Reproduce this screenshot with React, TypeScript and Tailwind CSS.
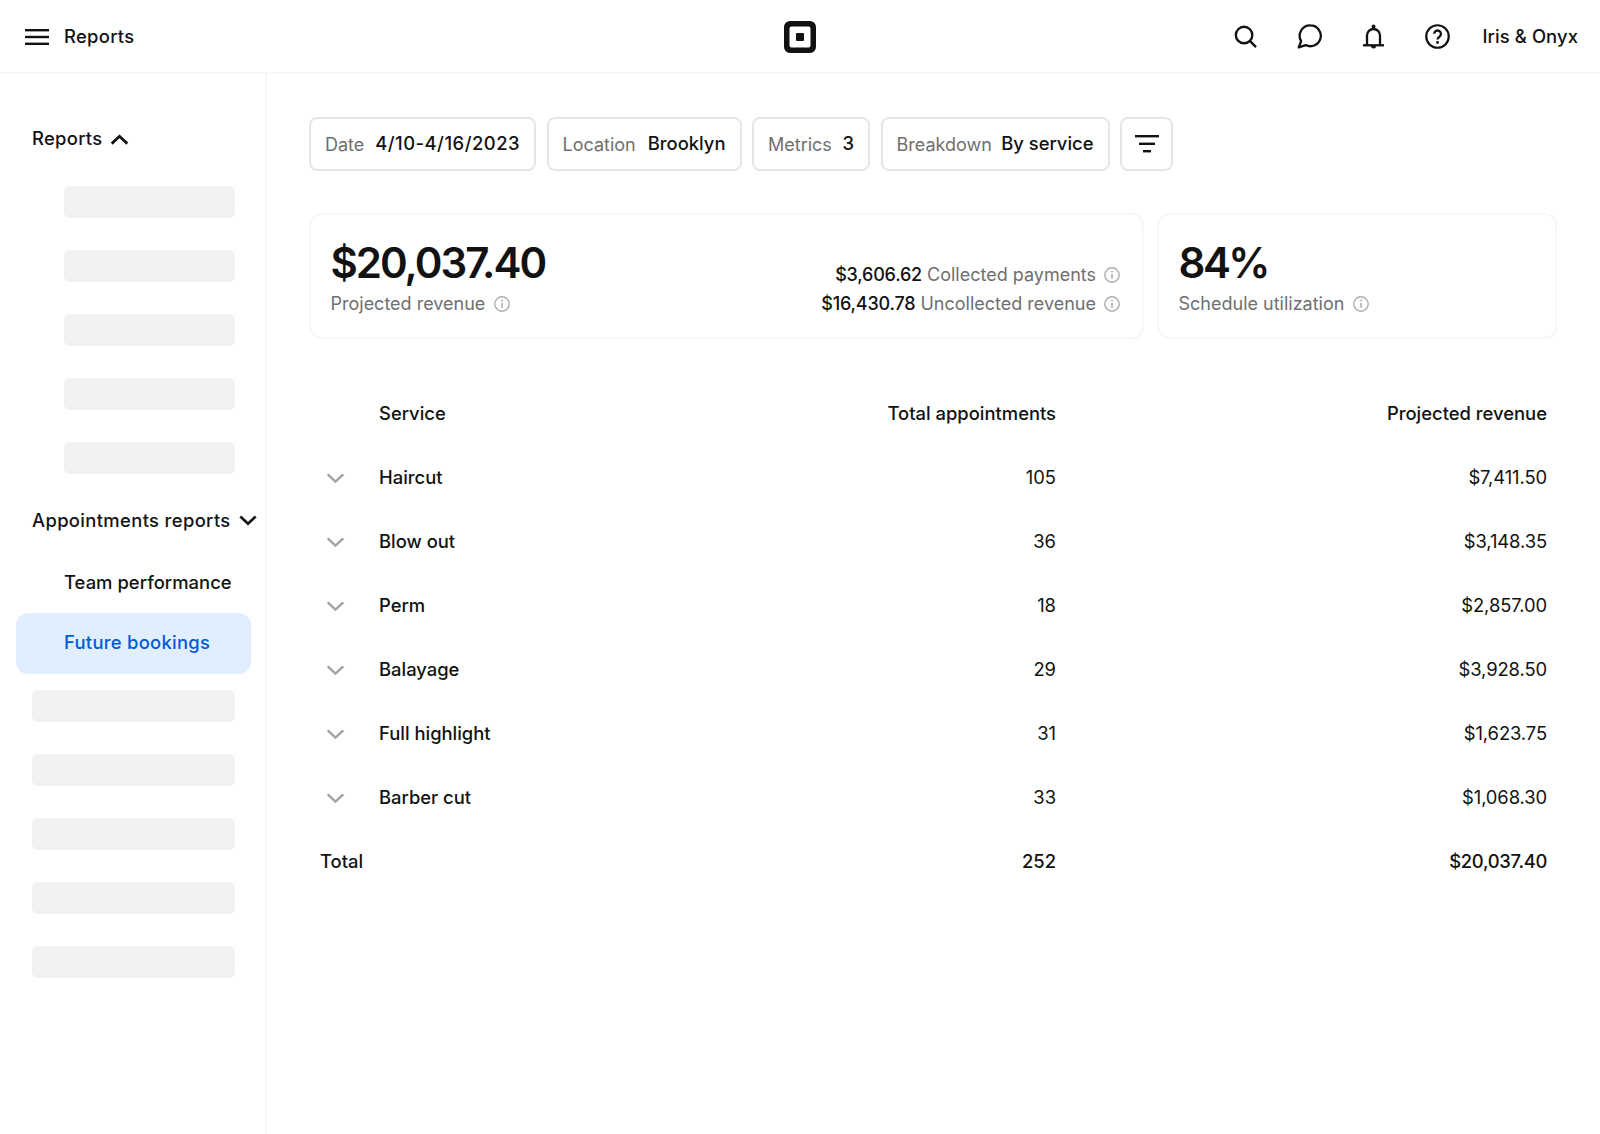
import React from "react";

const Skeleton = ({ wide }: { wide?: boolean }) => (
  <div className={`h-[32px] rounded-[6px] bg-[#f2f2f2] ${wide ? "w-[203px] ml-[32px]" : "w-[171px] ml-[64px]"}`} />
);

const Chevron = ({ up, className, weight = 2.6 }: { up?: boolean; className?: string; weight?: number }) => (
  <svg viewBox="0 0 20 12" fill="none" stroke="currentColor" strokeWidth={weight} className={className}>
    <path d={up ? "M1.5 10.5 10 2.5l8.5 8" : "M1.5 1.5l8.5 8 8.5-8"} />
  </svg>
);

const Info = () => (
  <svg viewBox="0 0 16 16" fill="none" className="w-[16px] h-[16px] text-[#adadad]" stroke="currentColor" strokeWidth="1.4">
    <circle cx="8" cy="8" r="7.2" />
    <path d="M8 7v4.8" strokeWidth="1.6" />
    <circle cx="8" cy="4.5" r="1" fill="currentColor" stroke="none" />
  </svg>
);

const Chip = ({ label, value, className, valueClass }: { label: string; value: string; className: string; valueClass?: string }) => (
  <div className={`h-[54px] border-2 border-[#e6e6e6] rounded-[8px] flex items-center justify-between px-[14px] ${className}`}>
    <span className="text-[#6f6f6f] text-[18px]">{label}</span>
    <span className={`font-medium text-[#121212] ${valueClass ?? ""}`}>{value}</span>
  </div>
);

const rows = [
  ["Haircut", "105", "$7,411.50"],
  ["Blow out", "36", "$3,148.35"],
  ["Perm", "18", "$2,857.00"],
  ["Balayage", "29", "$3,928.50"],
  ["Full highlight", "31", "$1,623.75"],
  ["Barber cut", "33", "$1,068.30"],
];

export default function App() {
  return (
    <div className="w-[1600px] h-[1134px] bg-white text-[#121212] text-[18.4px] overflow-hidden flex flex-col font-['Inter',sans-serif]">
      <header className="h-[74px] shrink-0 border-b-2 border-[#f7f7f7] flex items-center justify-between pl-[25px] pr-[22px] pt-[2px]">
        <div className="w-[397px] flex items-center gap-[15px]">
          <svg viewBox="0 0 24 16" className="w-[24px] h-[16px]" fill="currentColor">
            <rect width="24" height="2.4" y="0" />
            <rect width="24" height="2.4" y="6.8" />
            <rect width="24" height="2.4" y="13.6" />
          </svg>
          <span className="font-medium tracking-[0.3px]">Reports</span>
        </div>
        <svg viewBox="0 0 32 32" className="w-[32px] h-[32px]">
          <path fillRule="evenodd" fill="#121212" d="M6 0h20a6 6 0 0 1 6 6v20a6 6 0 0 1-6 6H6a6 6 0 0 1-6-6V6a6 6 0 0 1 6-6Zm1.5 5.5a2 2 0 0 0-2 2v17a2 2 0 0 0 2 2h17a2 2 0 0 0 2-2v-17a2 2 0 0 0-2-2Z" />
          <rect x="12" y="12" width="8" height="8" rx="1" fill="#121212" />
        </svg>
        <div className="w-[400px] flex items-center justify-end">
          <svg viewBox="0 0 24 24" fill="none" stroke="#121212" strokeWidth="2.5" className="w-[23px] h-[23px] mr-[40px]">
            <circle cx="10.5" cy="10.5" r="8.6" />
            <path d="M16.5 16.5 23 23" />
          </svg>
          <svg viewBox="0 0 26 26" fill="none" stroke="#121212" strokeWidth="2.4" className="w-[25px] h-[25px] mr-[41px]">
            <path d="M14 1.5a10.8 10.8 0 1 1-5 20.4L1.8 24.4l2.5-6.6A10.8 10.8 0 0 1 14 1.5Z" strokeLinejoin="round" />
          </svg>
          <svg viewBox="0 0 21 25" fill="none" stroke="#121212" strokeWidth="2.3" className="w-[21px] h-[25px] mr-[41px]">
            <path d="M4 21v-9.5a6.5 6.5 0 0 1 13 0V21" />
            <path d="M0 21.3h21" />
            <circle cx="10.5" cy="2.4" r="2" fill="#121212" stroke="none" />
            <path d="M8 22h5a2.5 2.5 0 0 1-5 0Z" fill="#121212" stroke="none" />
          </svg>
          <svg viewBox="0 0 26 26" fill="none" stroke="#121212" strokeWidth="2.3" className="w-[25px] h-[25px] mr-[32px]">
            <circle cx="13" cy="13" r="11.7" />
            <path d="M9.6 10.2a3.5 3.5 0 1 1 5.4 3c-1.3.8-2 1.4-2 2.9" strokeWidth="2.4" />
            <circle cx="13" cy="19.3" r="1.5" fill="#121212" stroke="none" />
          </svg>
          <span className="font-medium tracking-[0.1px]">Iris &amp; Onyx</span>
        </div>
      </header>

      <div className="flex-1 flex min-h-0">
        <aside className="w-[267px] shrink-0 border-r-2 border-[#f7f7f7] pt-[50px]">
          <div className="ml-[32px] h-[30px] flex items-center gap-[8px] font-medium tracking-[0.3px]">
            <span>Reports</span>
            <Chevron up weight={3} className="w-[19px] h-[11px]" />
          </div>
          <div className="mt-[31.5px] flex flex-col gap-[32px]">
            {[0, 1, 2, 3, 4].map((i) => <Skeleton key={i} />)}
          </div>
          <div className="mt-[32px] ml-[32px] h-[30px] flex items-center gap-[8px] font-medium tracking-[0.36px]">
            <span>Appointments reports</span>
            <Chevron weight={3} className="w-[18px] h-[11px]" />
          </div>
          <div className="mt-[32px] ml-[64px] h-[30px] flex items-center font-medium tracking-[0.04px]">Team performance</div>
          <div className="mt-[15px] ml-[16px] w-[235px] h-[61px] rounded-[12px] bg-[#e1eefe] pl-[48px] flex items-center font-medium text-[#005ad9] tracking-[0.28px]">
            Future bookings
          </div>
          <div className="mt-[16px] flex flex-col gap-[32px]">
            {[0, 1, 2, 3, 4].map((i) => <Skeleton key={i} wide />)}
          </div>
        </aside>

        <main className="flex-1 pl-[42px] pr-[43px] pt-[43px]">
          <div className="flex gap-[10.5px]">
            <Chip label="Date" value="4/10-4/16/2023" className="w-[227px]" valueClass="tracking-[0.5px]" />
            <Chip label="Location" value="Brooklyn" className="w-[195px]" />
            <Chip label="Metrics" value="3" className="w-[118px]" />
            <Chip label="Breakdown" value="By service" className="w-[229px]" />
            <div className="w-[53px] h-[54px] border-2 border-[#e6e6e6] rounded-[8px] flex items-center justify-center">
              <svg viewBox="0 0 24 18" className="w-[24px] h-[18px]" fill="#121212">
                <rect x="0" y="0" width="24" height="2.4" />
                <rect x="4" y="7.6" width="16" height="2.4" />
                <rect x="8" y="15" width="8" height="2.4" />
              </svg>
            </div>
          </div>

          <div className="mt-[42px] flex gap-[13px]">
            <div className="w-[835px] h-[126px] border-2 border-[#f7f7f7] rounded-[12px] pl-[19.5px] pr-[22px] flex justify-between">
              <div className="pt-[22px]">
                <div className="text-[42px] leading-[52px] font-semibold tracking-[-2px]">$20,037.40</div>
                <div className="mt-[3px] leading-[24px] flex items-center gap-[9px] text-[#6f6f6f] text-[18px]">
                  Projected revenue <Info />
                </div>
              </div>
              <div className="pt-[48px] flex flex-col items-end gap-[5px] leading-[24px] text-[18px]">
                <div className="flex items-center gap-[8px]">
                  <span className="text-[#6f6f6f]"><span className="font-medium text-[#121212] tracking-[-0.2px]">$3,606.62</span> Collected payments</span>
                  <Info />
                </div>
                <div className="flex items-center gap-[8px]">
                  <span className="text-[#6f6f6f]"><span className="font-medium text-[#121212] tracking-[-0.2px]">$16,430.78</span> Uncollected revenue</span>
                  <Info />
                </div>
              </div>
            </div>
            <div className="w-[400px] h-[126px] border-2 border-[#f7f7f7] rounded-[12px] pl-[19.5px] pt-[22px]">
              <div className="text-[42px] leading-[52px] font-semibold tracking-[-2.5px]">84%</div>
              <div className="mt-[3px] leading-[24px] flex items-center gap-[9px] text-[#6f6f6f] text-[18px]">
                Schedule utilization <Info />
              </div>
            </div>
          </div>

          <div className="mt-[43px] pl-[11px] w-[1238px]">
            <div className="grid grid-cols-[59px_1fr_491px] h-[64px] items-center font-medium">
              <span />
              <div className="flex justify-between"><span>Service</span><span>Total appointments</span></div>
              <span className="text-right">Projected revenue</span>
            </div>
            {rows.map((r) => (
              <div key={r[0]} className="grid grid-cols-[59px_1fr_491px] h-[64px] items-center">
                <Chevron className="w-[19px] h-[11px] ml-[6px] text-[#a3a3a3]" />
                <div className="flex justify-between"><span className="font-medium">{r[0]}</span><span>{r[1]}</span></div>
                <span className="text-right tracking-[-0.1px]">{r[2]}</span>
              </div>
            ))}
            <div className="grid grid-cols-[59px_1fr_491px] h-[64px] items-center font-medium">
              <span className="col-span-2 flex justify-between"><span>Total</span><span>252</span></span>
              <span className="text-right tracking-[-0.3px]">$20,037.40</span>
            </div>
          </div>
        </main>
      </div>
    </div>
  );
}
